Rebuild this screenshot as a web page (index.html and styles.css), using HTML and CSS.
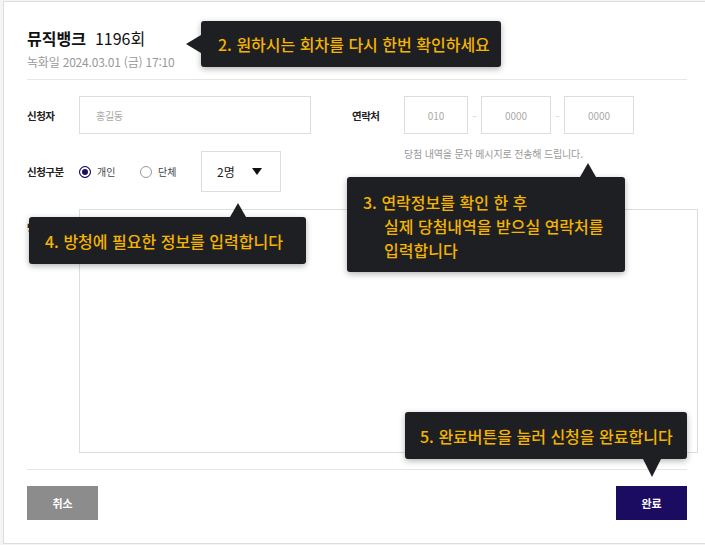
FILE: index.html
```html
<!DOCTYPE html>
<html lang="ko">

<head>
  <meta charset="UTF-8" />
  <meta name="viewport" content="width=device-width, initial-scale=1" />
  <title>방청 신청</title>
  <link rel="stylesheet" href="styles.css">
</head>

<body>
  <div class="apply">
    <div class="apply-head">
      <h1 class="show-title"><strong>뮤직뱅크</strong>1196회</h1>
      <p class="show-date">녹화일 2024.03.01 (금) 17:10</p>
    </div>

    <div class="apply-form">
      <div class="form-col">
        <div class="form-row">
          <span class="form-label">신청자</span>
          <div class="text-box name-box">홍길동</div>
        </div>
        <div class="form-row type-row">
          <span class="form-label">신청구분</span>
          <label class="radio"><span class="radio-mark checked"></span>개인</label>
          <label class="radio"><span class="radio-mark"></span>단체</label>
          <div class="select-box">2명<span class="select-arrow"></span></div>
        </div>
      </div>

      <div class="form-col">
        <div class="form-row">
          <span class="form-label">연락처</span>
          <div class="text-box phone-box first">010</div>
          <span class="phone-dash">-</span>
          <div class="text-box phone-box">0000</div>
          <span class="phone-dash">-</span>
          <div class="text-box phone-box">0000</div>
        </div>
        <p class="hint">당첨 내역을 문자 메시지로 전송해 드립니다.</p>
      </div>
    </div>

    <div class="memo-row">
      <span class="form-label memo-label">방청사연</span>
      <div class="memo-box"></div>
    </div>

    <div class="apply-foot">
      <button class="btn btn-cancel">취소</button>
      <button class="btn btn-done">완료</button>
    </div>

    <!-- guide tooltips -->
    <div class="tip tip-round">2. 원하시는 회차를 다시 한번 확인하세요</div>
    <div class="tip tip-phone">
      <div>3. 연락정보를 확인 한 후</div>
      <div class="tip-indent">실제 당첨내역을 받으실 연락처를</div>
      <div class="tip-indent">입력합니다</div>
    </div>
    <div class="tip tip-info">4. 방청에 필요한 정보를 입력합니다</div>
    <div class="tip tip-done">5. 완료버튼을 눌러 신청을 완료합니다</div>
  </div>
</body>

</html>
```

FILE: styles.css
```css
* {
  box-sizing: border-box;
}

body {
  margin: 0;
  padding: 1px 0 0 3px;
  background: #f4f4f4;
  font-family: "Noto Sans CJK KR", "Noto Sans", sans-serif;
  color: #222;
  overflow: hidden;
}

.apply {
  position: relative;
  width: 708px;
  background: #fff;
  border: 1px solid #ddd;
  padding: 23px 23px 23px;
}

.apply-head {
  padding-bottom: 8px;
  border-bottom: 1px solid #e6e6e6;
}

.show-title {
  margin: 0;
  font-size: 16px;
  font-weight: 400;
  line-height: 26px;
  color: #111;
}

.show-title strong {
  font-weight: 700;
  margin-right: 9px;
}

.show-date {
  margin: 2px 0 0;
  font-size: 12px;
  line-height: 18px;
  color: #999;
  letter-spacing: -0.2px;
}

.apply-form {
  display: grid;
  grid-template-columns: 325px 1fr;
  padding-top: 16px;
}

.form-col {
  display: flex;
  flex-direction: column;
  gap: 17px;
}

.form-row {
  display: flex;
  align-items: center;
}

.form-label {
  width: 52px;
  flex-shrink: 0;
  font-size: 10.5px;
  font-weight: 700;
  letter-spacing: -0.5px;
  color: #222;
}

.text-box {
  height: 38px;
  border: 1px solid #ddd;
  display: flex;
  align-items: center;
  font-size: 10px;
  color: #aaa;
}

.name-box {
  width: 232px;
  padding-left: 16px;
  letter-spacing: -0.3px;
}

.phone-box {
  width: 70px;
  justify-content: center;
}

.phone-box.first {
  width: 64px;
}

.phone-dash {
  width: 13px;
  text-align: center;
  font-size: 10px;
  color: #ccc;
}

.hint {
  margin: -5px 0 0 52px;
  font-size: 10px;
  line-height: 16px;
  color: #999;
  letter-spacing: -0.15px;
}

.type-row {
  height: 41px;
}

.radio {
  width: 61px;
  display: flex;
  align-items: center;
  gap: 6px;
  font-size: 10px;
  color: #444;
}

.radio-mark {
  width: 12px;
  height: 12px;
  border: 1px solid #999;
  border-radius: 50%;
  background: #fff;
}

.radio-mark.checked {
  border: 1.5px solid #1b0b61;
  box-shadow: inset 0 0 0 2px #fff;
  background: #1b0b61;
}

.select-box {
  width: 80px;
  height: 41px;
  border: 1px solid #ddd;
  display: flex;
  align-items: center;
  justify-content: space-between;
  padding: 0 18px 0 15px;
  font-size: 12px;
  color: #222;
}

.select-arrow {
  width: 0;
  height: 0;
  border-left: 5px solid transparent;
  border-right: 5px solid transparent;
  border-top: 7px solid #111;
}

.memo-row {
  display: flex;
  margin-top: 17px;
}

.memo-label {
  padding-top: 11px;
  line-height: 16px;
}

.memo-box {
  width: 619px;
  height: 244px;
  flex-shrink: 0;
  border: 1px solid #ddd;
}

.apply-foot {
  margin-top: 16px;
  padding-top: 16px;
  border-top: 1px solid #e6e6e6;
  display: flex;
  justify-content: space-between;
}

.btn {
  width: 71px;
  height: 34px;
  border: none;
  font-family: inherit;
  font-size: 11px;
  font-weight: 700;
  color: #fff;
  cursor: pointer;
}

.btn-cancel {
  background: #8c8c8c;
}

.btn-done {
  background: #1b0b61;
}

/* guide tooltips */
.tip {
  position: absolute;
  background: #1e1f22;
  color: #f4b400;
  font-size: 16px;
  font-weight: 500;
  line-height: 22px;
  white-space: nowrap;
  border-radius: 3px;
  box-shadow: 0 2px 6px rgba(0, 0, 0, 0.3);
}

.tip::before {
  content: "";
  position: absolute;
  width: 0;
  height: 0;
}

.tip-round {
  left: 197px;
  top: 19px;
  width: 300px;
  height: 46px;
  padding: 12px 0 0 17px;
}

.tip-round::before {
  left: -15px;
  top: 14px;
  border-top: 9px solid transparent;
  border-bottom: 9px solid transparent;
  border-right: 15px solid #1e1f22;
}

.tip-phone {
  left: 343px;
  top: 175px;
  width: 278px;
  height: 95px;
  padding: 13px 0 0 16px;
  line-height: 24px;
}

.tip-phone::before {
  left: 233px;
  top: -14px;
  border-left: 8px solid transparent;
  border-right: 8px solid transparent;
  border-bottom: 14px solid #1e1f22;
}

.tip-indent {
  padding-left: 21px;
}

.tip-info {
  left: 25px;
  top: 215px;
  width: 277px;
  height: 47px;
  padding: 13px 0 0 16px;
}

.tip-info::before {
  left: 201px;
  top: -14px;
  border-left: 8px solid transparent;
  border-right: 8px solid transparent;
  border-bottom: 14px solid #1e1f22;
}

.tip-done {
  left: 401px;
  top: 410px;
  width: 282px;
  height: 47px;
  padding: 13px 0 0 15px;
}

.tip-done::before {
  left: 238px;
  bottom: -18px;
  border-left: 9px solid transparent;
  border-right: 9px solid transparent;
  border-top: 18px solid #1e1f22;
}
```
